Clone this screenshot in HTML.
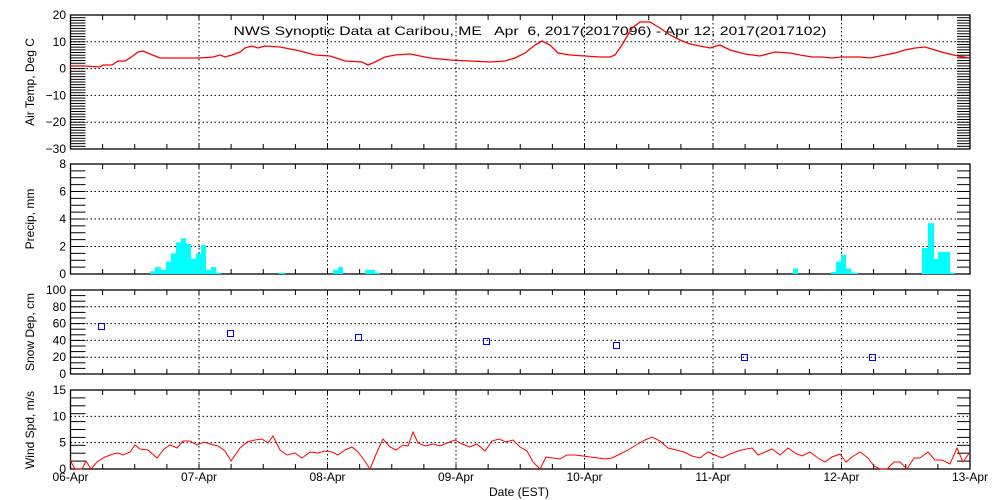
<!DOCTYPE html>
<html><head><meta charset="utf-8"><style>
html,body{margin:0;padding:0;background:#fff;width:1000px;height:500px;overflow:hidden}
svg{display:block}
text{font-family:"Liberation Sans",sans-serif;font-size:12px;fill:#000}
</style></head><body>
<svg id="s" width="1000" height="500" viewBox="0 0 1000 500" xmlns="http://www.w3.org/2000/svg">
<g id="g"></g>
<text x="530" y="35" text-anchor="middle" font-size="13" textLength="593" lengthAdjust="spacingAndGlyphs" style="white-space:pre">NWS Synoptic Data at Caribou, ME   Apr  6, 2017(2017096) - Apr 12, 2017(2017102)</text>
<text transform="translate(34,82) rotate(-90)" text-anchor="middle" font-size="13">Air Temp, Deg C</text>
<text transform="translate(34,219) rotate(-90)" text-anchor="middle" font-size="13">Precip, mm</text>
<text transform="translate(34,332) rotate(-90)" text-anchor="middle" font-size="13">Snow Dep, cm</text>
<text transform="translate(34,430) rotate(-90)" text-anchor="middle" font-size="13">Wind Spd, m/s</text>
<text x="519" y="496" text-anchor="middle" font-size="13">Date (EST)</text>
<polyline fill="none" stroke="#f00" stroke-width="1.3" points="70,66 85,66 100,67 103,65 112,65 118,61 125,61 130,58 138,52 143,51 150,54 155,56 160,58 170,58 199,58 213,57 220,55 225,57 232,55 240,52 245,48 252,46 258,48 265,46 280,47 290,49 300,51 315,55 330,56 345,61 362,62 368,65 375,62 385,57 395,55 410,54 420,56 430,58 450,60 470,61 490,62 505,61 515,58 525,53 535,45 542,41 550,45 558,53 570,55 585,56 600,57 610,57 615,55 622,45 632,28 640,22 650,22 660,28 670,35 680,40 690,44 700,46 710,48 720,45 730,50 745,54 760,56 775,52 790,53 800,55 812,57 822,57 832,58 842,57 850,57 860,57 870,58 880,56 895,53 905,50 915,48 925,47 935,50 945,53 958,56 970,58"/>
<polyline fill="none" stroke="#f00" stroke-width="1" points="70,460 75,469 82,469 86,461 91,469 97,462 105,457 113,454 118,453 123,455 130,452 135,445 140,449 148,450 157,458 164,449 170,445 177,448 183,441 190,441 197,445 204,442 210,444 218,446 225,451 231,461 240,448 247,442 255,440 262,439 268,443 273,436 280,450 287,455 295,453 302,458 310,452 318,453 325,451 332,452 338,455 345,450 352,447 358,452 364,460 370,469 377,452 383,439 390,447 396,450 403,445 408,446 413,432 418,443 425,446 433,444 440,446 447,443 455,440 462,444 470,447 477,444 485,451 492,441 499,439 506,442 513,440 520,447 527,451 533,462 540,469 546,457 553,458 560,459 567,455 575,455 583,456 590,457 598,458 605,459 612,458 620,454 628,450 636,445 645,440 652,437 660,441 668,448 676,450 684,452 692,456 700,458 708,452 715,455 722,458 730,454 738,451 746,449 752,448 758,455 765,452 772,449 780,455 788,448 795,453 802,456 810,452 818,458 825,462 832,457 840,454 846,462 852,457 860,452 868,458 874,466 880,469 887,469 894,462 900,462 907,469 914,458 920,458 928,452 935,460 942,460 950,464 957,448 963,462 970,452"/>
</svg>
<script>
const g=document.getElementById('g');let h='';
const X0=70.5,X1=970,D=(X1-X0)/7;
function L(x1,y1,x2,y2,extra){h+=`<line x1="${x1}" y1="${y1}" x2="${x2}" y2="${y2}" stroke="#000" stroke-width="1" ${extra||''}/>`;}
function T(x,y,t,a){h+=`<text x="${x}" y="${y}" text-anchor="${a||'end'}" font-size="13">${t}</text>`;}
const dot='stroke-dasharray="1.5,2.5"';
const panels=[
 {t:15,b:149,lo:-30,hi:20,labs:[-30,-20,-10,0,10,20],grid:[-20,-10,0,10],minor:1},
 {t:164,b:274,lo:0,hi:8,labs:[0,2,4,6,8],grid:[2,4,6],minor:0.5},
 {t:290,b:374,lo:0,hi:100,labs:[0,20,40,60,80,100],grid:[20,40,60,80],minor:100/15},
 {t:390,b:469,lo:0,hi:15,labs:[0,5,10,15],grid:[5,10],minor:1.5}];
panels.forEach((p,i)=>{
 const Y=v=>p.b-(v-p.lo)/(p.hi-p.lo)*(p.b-p.t);
 h+=`<rect x="${X0}" y="${p.t}" width="${X1-X0}" height="${p.b-p.t}" fill="none" stroke="#000" stroke-width="1.3"/>`;
 p.grid.forEach(v=>L(X0,Y(v),X1,Y(v),dot));
 for(let d=1;d<7;d++)L(X0+d*D,p.t,X0+d*D,p.b,dot);
 for(let v=p.lo;v<=p.hi+0.001;v+=p.minor){L(X0,Y(v),X0+15,Y(v));L(X1-13,Y(v),X1,Y(v));}
 for(let k=1;k<28;k++){const x=X0+k*D/4;L(x,p.t,x,p.t+5);L(x,p.b,x,p.b-5);}
 p.labs.forEach(v=>T(66,Y(v)+4,String(v).replace('-','\u2212')));
});
const bars=[[150,155,.2],[155,161,.5],[161,166,.3],[166,171,.9],[171,176,1.5],[176,181,2.3],[181,186,2.6],[186,191,2.2],[191,196,1.1],[196,201,1.5],[201,206,2.1],[206,211,.3],[211,216,.5],[216,221,.1],[279,285,.1],[333,338,.3],[338,343,.5],[365,375,.3],[375,380,.1],[793,798,.4],[831,836,.15],[836,841,.9],[841,846,1.4],[846,851,.4],[851,858,.1],[922,928,1.9],[928,934,3.7],[934,938,1.1],[938,950,1.6],[950,955,.1]];
bars.forEach(b=>{const y=274-b[2]*13.75;h+=`<rect x="${b[0]}" y="${y}" width="${b[1]-b[0]}" height="${274-y}" fill="#0ff"/>`;});
[[102,327],[231,334],[359,338],[487,342],[617,346],[745,358],[873,358]].forEach(p=>h+=`<rect x="${p[0]-3.5}" y="${p[1]-3.5}" width="6" height="6" fill="none" stroke="#00f" stroke-width="1.2" shape-rendering="crispEdges"/>`);
const days=['06-Apr','07-Apr','08-Apr','09-Apr','10-Apr','11-Apr','12-Apr','13-Apr'];
days.forEach((d,i)=>T(X0+i*D,481,d,'middle'));
g.innerHTML=h;
</script>
</body></html>
